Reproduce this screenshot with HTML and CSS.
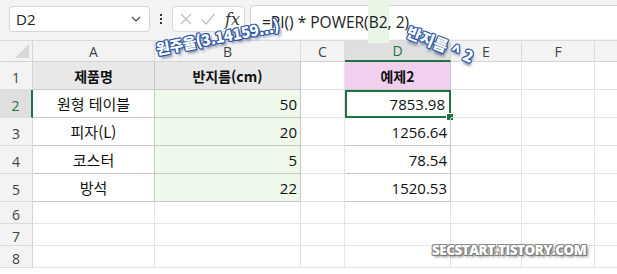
FILE: index.html
```html
<!DOCTYPE html>
<html lang="ko">
<head>
<meta charset="utf-8">
<link rel="stylesheet" href="styles.css">
</head>
<body>
<div class="app">
  <div class="toolbar">
    <div class="namebox">
      <span class="nb-text">D2</span>
      <svg class="chev" width="10" height="6" viewBox="0 0 10 6"><path d="M1 1 L5 5 L9 1" fill="none" stroke="#444" stroke-width="1.2"/></svg>
    </div>
    <div class="dots"><i></i><i></i><i></i></div>
    <div class="fnbox">
      <svg width="14" height="14" viewBox="0 0 14 14"><path d="M2 2 L12 12 M12 2 L2 12" stroke="#bdbdbd" stroke-width="1.2" fill="none"/></svg>
      <svg width="16" height="14" viewBox="0 0 16 14"><path d="M1.5 7.5 L6 12 L14.5 2" stroke="#bdbdbd" stroke-width="1.2" fill="none"/></svg>
      <span class="fx">fx</span>
    </div>
    <div class="formula"><span class="ftext">=PI() * POWER(<span class="ref">B2</span>, 2)</span></div>
  </div>
  <div class="grid">
    <div class="corner"></div>
    <div class="ch">A</div><div class="ch">B</div><div class="ch">C</div><div class="ch sel">D</div><div class="ch">E</div><div class="ch">F</div><div class="ch last"></div>

    <div class="rh">1</div>
    <div class="c t hd center">제품명</div><div class="c t hd center">반지름(cm)</div><div class="c"></div><div class="c t pink center">예제2</div><div class="c"></div><div class="c"></div><div class="c last"></div>

    <div class="rh sel">2</div>
    <div class="c t center">원형 테이블</div><div class="c t green num">50</div><div class="c"></div><div class="c t num active">7853.98</div><div class="c"></div><div class="c"></div><div class="c last"></div>

    <div class="rh">3</div>
    <div class="c t center">피자(L)</div><div class="c t green num">20</div><div class="c"></div><div class="c t num">1256.64</div><div class="c"></div><div class="c"></div><div class="c last"></div>

    <div class="rh">4</div>
    <div class="c t center">코스터</div><div class="c t green num">5</div><div class="c"></div><div class="c t num">78.54</div><div class="c"></div><div class="c"></div><div class="c last"></div>

    <div class="rh">5</div>
    <div class="c t center">방석</div><div class="c t green num">22</div><div class="c"></div><div class="c t num">1520.53</div><div class="c"></div><div class="c"></div><div class="c last"></div>

    <div class="rh">6</div>
    <div class="c"></div><div class="c"></div><div class="c"></div><div class="c"></div><div class="c"></div><div class="c"></div><div class="c last"></div>
    <div class="rh">7</div>
    <div class="c"></div><div class="c"></div><div class="c"></div><div class="c"></div><div class="c"></div><div class="c"></div><div class="c last"></div>
    <div class="rh">8</div>
    <div class="c"></div><div class="c"></div><div class="c"></div><div class="c"></div><div class="c"></div><div class="c"></div><div class="c last"></div>
  </div>
  <div class="note note-pi">원주율(3.14159...)</div>
  <div class="note note-r">반지름 ^ 2</div>
  <div class="watermark">SECSTART.TISTORY.COM</div>
</div>
</body>
</html>
```

FILE: styles.css
```css
* { box-sizing: border-box; }
html, body { margin: 0; padding: 0; background: #fff; }
body { width: 617px; height: 274px; overflow: hidden; font-family: "Open Sans", "Noto Sans CJK KR", sans-serif; color: #111; }
.app { position: relative; width: 617px; height: 274px; overflow: hidden; }

.toolbar { height: 40px; background: #f3f3f3; display: flex; align-items: flex-start; padding: 6px 0 0 9px; }
.namebox { width: 141px; height: 26px; background: #fff; border: 1px solid #d6d6d6; border-radius: 4px; display: flex; align-items: center; justify-content: space-between; padding: 0 8px 0 6px; }
.nb-text { font-size: 15px; color: #222; }
.dots { width: 22px; height: 26px; display: flex; flex-direction: column; align-items: center; justify-content: center; gap: 2px; }
.dots i { width: 2px; height: 2px; background: #333; display: block; }
.fnbox { width: 73px; height: 26px; background: #fff; border: 1px solid #d6d6d6; border-radius: 4px; display: flex; align-items: center; gap: 7px; padding: 0 0 0 6px; }
.fx { font-family: "DejaVu Serif", "Liberation Serif", serif; font-style: italic; font-size: 16px; color: #333; margin-left: 2px; }
.formula { position: relative; z-index: 0; flex: 1; height: 34px; margin-top: -1px; margin-left: 5px; background: #fff; border: 1px solid #d6d6d6; border-right: none; border-bottom: none; border-radius: 4px 0 0 0; display: flex; align-items: center; padding: 0 0 2px 11px; }
.ftext { font-size: 15.5px; color: #222; white-space: nowrap; }
.ref { position: relative; }
.ref::before { content: ""; position: absolute; z-index: -1; left: -1px; right: -1px; top: -10px; bottom: -10px; background: #e9f6e6; }

.grid { display: grid; grid-template-columns: 33px 122px 146px 44px 106px 71px 73px 1fr; grid-template-rows: 22px repeat(5, 28px) repeat(3, 22px); }
.corner { background: #f3f3f3; border-right: 1px solid #d4d4d4; border-bottom: 1px solid #d4d4d4; border-top: 1px solid #dcdcdc; position: relative; }
.corner::after { content: ""; position: absolute; right: 3px; bottom: 3px; width: 0; height: 0; border-left: 14px solid transparent; border-bottom: 14px solid #d8d8d8; }
.ch { background: #f3f3f3; border-top: 1px solid #dcdcdc; border-right: 1px solid #dcdcdc; border-bottom: 1px solid #d4d4d4; font-size: 14px; color: #444; display: flex; align-items: center; justify-content: center; }
.ch.sel { background: #dfdfdf; color: #1e7145; border-bottom: 2px solid #1e7145; }
.ch.last, .c.last { border-right: none; }
.rh { background: #f3f3f3; border-right: 1px solid #d4d4d4; border-bottom: 1px solid #dcdcdc; font-size: 14px; color: #444; display: flex; align-items: center; justify-content: center; padding-top: 3px; }
.rh.sel { background: #dfdfdf; color: #1e7145; border-right: 2px solid #1e7145; }
.c { border-right: 1px solid #e3e3e3; border-bottom: 1px solid #e3e3e3; font-size: 15px; display: flex; align-items: center; position: relative; }
.c.t { border-right-color: #c8c8c8; border-bottom-color: #c8c8c8; }
.center { justify-content: center; font-family: "Noto Sans CJK KR", sans-serif; }
.num { justify-content: flex-end; padding-right: 3px; }
.hd { background: #e8e8e8; font-weight: 700; font-size: 14px; }
.pink { background: #f1d0ef; font-weight: 700; font-size: 14px; }
.green { background: #eef8eb; }
.active { outline: 2px solid #1e7145; outline-offset: -2px; padding-right: 5px; }
.active::after { content: ""; position: absolute; right: -4px; bottom: -4px; width: 6px; height: 6px; background: #1e7145; border: 1px solid #fff; }

.note { position: absolute; font-family: "Noto Sans CJK KR", sans-serif; font-weight: 900; font-size: 15px; color: #fff; white-space: nowrap; transform-origin: left bottom;
  text-shadow: 1px 1px 0 #2d57a8, -1px -1px 0 #2d57a8, 1px -1px 0 #2d57a8, -1px 1px 0 #2d57a8, 0 1px 0 #2d57a8, 0 -1px 0 #2d57a8, 1px 0 0 #2d57a8, -1px 0 0 #2d57a8, 2px 3px 3px rgba(20,40,90,0.6); }
.note-pi { left: 158px; top: 38px; transform: rotate(-11deg); letter-spacing: -0.3px; }
.note-r { left: 412px; top: 20px; transform-origin: left top; transform: rotate(22deg); font-size: 15.5px; }
.watermark { position: absolute; left: 432px; top: 241px; font-family: "Open Sans", sans-serif; font-weight: 800; font-size: 13.5px; letter-spacing: -0.5px; color: #fff;
  text-shadow: 1px 1px 0 #777, -1px -1px 0 #888, 1px -1px 0 #888, -1px 1px 0 #888, 2px 2px 3px rgba(0,0,0,0.5); }
```
